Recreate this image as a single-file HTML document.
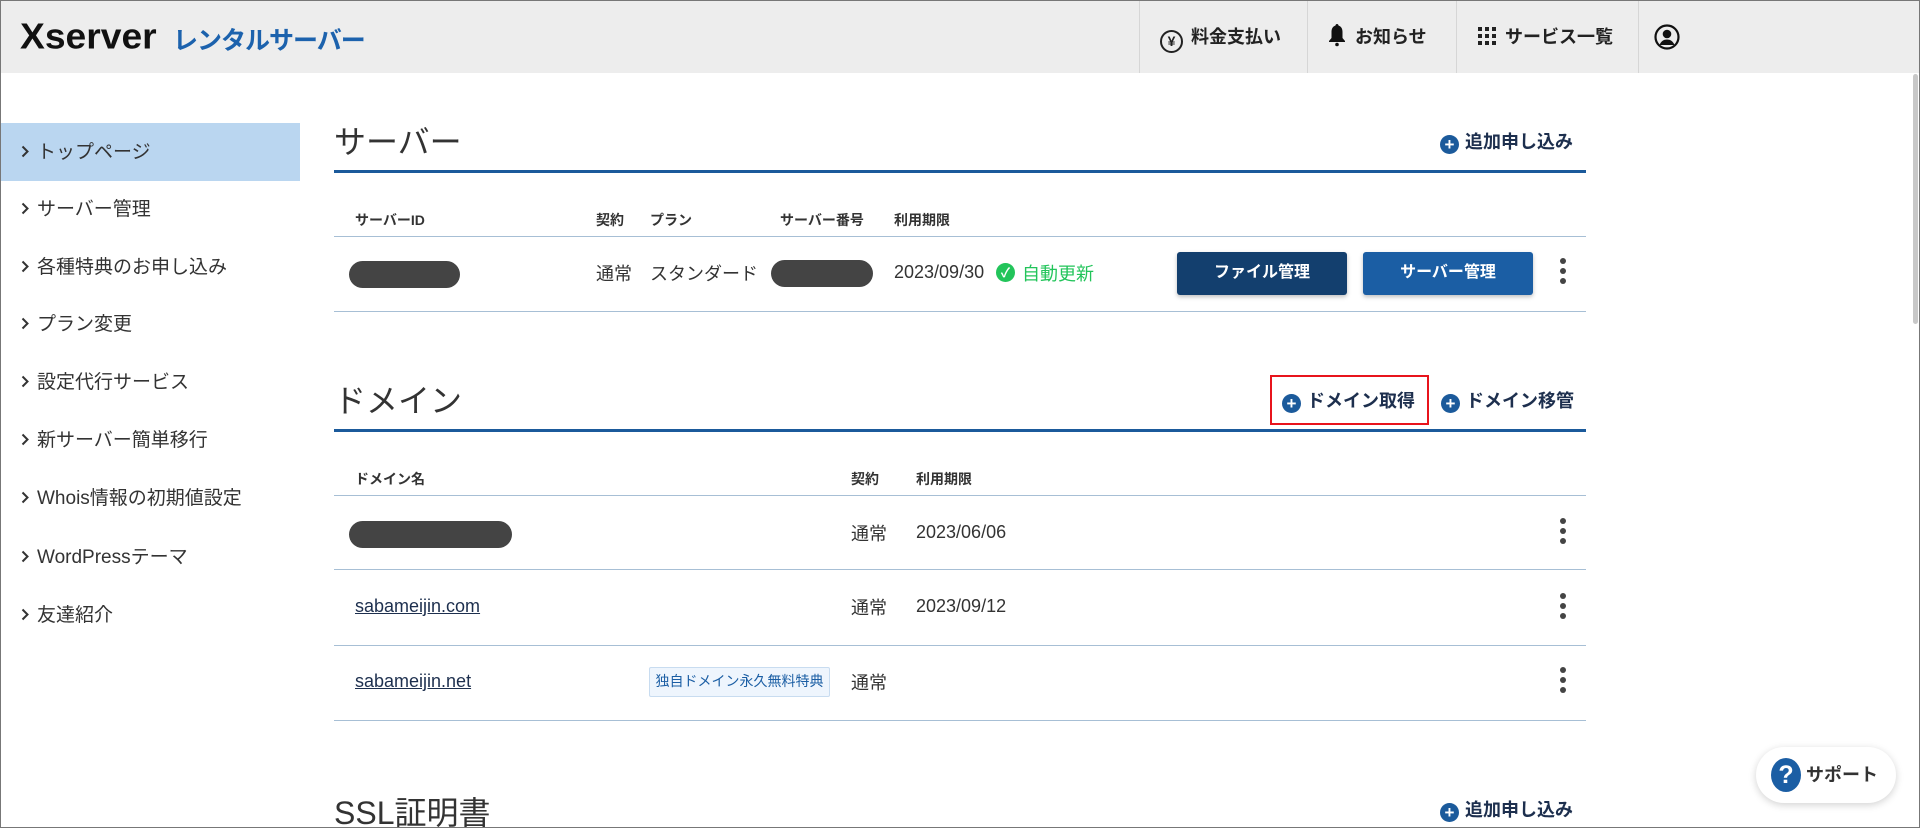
<!DOCTYPE html>
<html><head><meta charset="utf-8"><style>
*{margin:0;padding:0;box-sizing:border-box}
body{width:1920px;height:828px;overflow:hidden;background:#fff;font-family:"Liberation Sans","Noto Sans CJK JP",sans-serif;color:#333;position:relative}
.a{position:absolute;white-space:nowrap}
.hdr{left:0;top:0;width:1920px;height:73px;background:#ededed}
.vd{position:absolute;top:0;width:1px;height:73px;background:#d6d6d6}
.nav{font-size:18px;font-weight:bold;color:#222;top:23px}
.side{font-size:19px;color:#333;left:21px}
.side svg{margin-right:8px;vertical-align:0px}
.h2{font-size:32px;color:#333;left:334px}
.bl{left:334px;width:1252px;height:3px;background:#1b5a9b}
.ln{left:334px;width:1252px;height:1px;background:#a7bfd5}
.th{font-size:14px;font-weight:bold;color:#333}
.td{font-size:18px;color:#333}
.add{font-size:18px;font-weight:bold;color:#1d2f4e}
.pc{display:inline-block;width:19px;height:19px;border-radius:50%;background:#1b5a9b;color:#fff;font-size:17px;line-height:19px;text-align:center;vertical-align:-2px;margin-right:6px;font-weight:bold}
.pill{background:#444;border-radius:14px;height:27px}
.keb{width:6px}
.keb i{display:block;width:6px;height:6px;border-radius:50%;background:#444;margin:0 0 4px}
.lk{font-size:18px;color:#1d2f4e;text-decoration:underline}
</style></head><body>
<div class="a hdr"></div>
<div class="a" style="left:20px;top:17px;font-size:38px;font-weight:bold;color:#111;letter-spacing:0px;transform:scale(0.98,0.95);transform-origin:left top">Xserver</div>
<div class="a" style="left:173px;top:21px;font-size:25px;font-weight:bold;color:#1c62ad;letter-spacing:-1px">レンタルサーバー</div>
<div class="vd" style="left:1139px"></div><div class="vd" style="left:1307px"></div><div class="vd" style="left:1456px"></div><div class="vd" style="left:1638px"></div>
<div class="a nav" style="left:1160px"><span style="display:inline-block;width:23px;height:23px;border:2px solid #222;border-radius:50%;text-align:center;font-size:14px;line-height:19px;vertical-align:-3px;margin-right:8px">¥</span>料金支払い</div>
<div class="a nav" style="left:1328px"><svg width="18" height="24" viewBox="0 0 18 24" style="vertical-align:-4px;margin-right:9px"><path d="M9 1c-1 0-1.5.8-1.5 1.5C4.5 3.5 3.5 6 3.5 9v6L1 18v1h16v-1l-2.5-3V9c0-3-1-5.5-4-6.5C10.5 1.8 10 1 9 1z" fill="#111"/><circle cx="9" cy="21.5" r="1.8" fill="#111"/></svg>お知らせ</div>
<div class="a nav" style="left:1478px"><svg width="18" height="18" viewBox="0 0 18 18" style="vertical-align:-2px;margin-right:9px"><g fill="#222"><rect x="0" y="0" width="4" height="4"/><rect x="7" y="0" width="4" height="4"/><rect x="14" y="0" width="4" height="4"/><rect x="0" y="7" width="4" height="4"/><rect x="7" y="7" width="4" height="4"/><rect x="14" y="7" width="4" height="4"/><rect x="0" y="14" width="4" height="4"/><rect x="7" y="14" width="4" height="4"/><rect x="14" y="14" width="4" height="4"/></g></svg>サービス一覧</div>
<svg class="a" style="left:1654px;top:24px" width="26" height="26" viewBox="0 0 26 26"><circle cx="13" cy="13" r="11.5" fill="none" stroke="#111" stroke-width="2.2"/><circle cx="13" cy="10" r="4.3" fill="#111"/><path d="M5.5 21c1.5-4 4.5-5.5 7.5-5.5s6 1.5 7.5 5.5z" fill="#111"/></svg>

<div class="a" style="left:0;top:123px;width:300px;height:58px;background:#bad6f0"></div>
<div class="a side" style="top:137px"><svg width="8" height="13" viewBox="0 0 8 13"><path d="M1.5 1.5l5 5-5 5" fill="none" stroke="#333" stroke-width="2"/></svg>トップページ</div>
<div class="a side" style="top:194px"><svg width="8" height="13" viewBox="0 0 8 13"><path d="M1.5 1.5l5 5-5 5" fill="none" stroke="#333" stroke-width="2"/></svg>サーバー管理</div>
<div class="a side" style="top:252px"><svg width="8" height="13" viewBox="0 0 8 13"><path d="M1.5 1.5l5 5-5 5" fill="none" stroke="#333" stroke-width="2"/></svg>各種特典のお申し込み</div>
<div class="a side" style="top:309px"><svg width="8" height="13" viewBox="0 0 8 13"><path d="M1.5 1.5l5 5-5 5" fill="none" stroke="#333" stroke-width="2"/></svg>プラン変更</div>
<div class="a side" style="top:367px"><svg width="8" height="13" viewBox="0 0 8 13"><path d="M1.5 1.5l5 5-5 5" fill="none" stroke="#333" stroke-width="2"/></svg>設定代行サービス</div>
<div class="a side" style="top:425px"><svg width="8" height="13" viewBox="0 0 8 13"><path d="M1.5 1.5l5 5-5 5" fill="none" stroke="#333" stroke-width="2"/></svg>新サーバー簡単移行</div>
<div class="a side" style="top:483px"><svg width="8" height="13" viewBox="0 0 8 13"><path d="M1.5 1.5l5 5-5 5" fill="none" stroke="#333" stroke-width="2"/></svg>Whois情報の初期値設定</div>
<div class="a side" style="top:542px"><svg width="8" height="13" viewBox="0 0 8 13"><path d="M1.5 1.5l5 5-5 5" fill="none" stroke="#333" stroke-width="2"/></svg>WordPressテーマ</div>
<div class="a side" style="top:600px"><svg width="8" height="13" viewBox="0 0 8 13"><path d="M1.5 1.5l5 5-5 5" fill="none" stroke="#333" stroke-width="2"/></svg>友達紹介</div>

<div class="a h2" style="top:117px">サーバー</div>
<div class="a add" style="left:1440px;top:128px"><span class="pc">+</span>追加申し込み</div>
<div class="a bl" style="top:170px"></div>
<div class="a th" style="left:355px;top:210px">サーバーID</div>
<div class="a th" style="left:596px;top:210px">契約</div>
<div class="a th" style="left:650px;top:210px">プラン</div>
<div class="a th" style="left:780px;top:210px">サーバー番号</div>
<div class="a th" style="left:894px;top:210px">利用期限</div>
<div class="a ln" style="top:236px"></div>
<div class="a pill" style="left:349px;top:261px;width:111px"></div>
<div class="a td" style="left:596px;top:260px">通常</div>
<div class="a td" style="left:650px;top:260px">スタンダード</div>
<div class="a pill" style="left:771px;top:260px;width:102px"></div>
<div class="a td" style="left:894px;top:262px">2023/09/30</div>
<div class="a" style="left:996px;top:263px;width:19px;height:19px;border-radius:50%;background:#22c45a;color:#fff;font-size:13px;text-align:center;line-height:19px;font-weight:bold">✓</div>
<div class="a td" style="left:1022px;top:260px;color:#22c45a">自動更新</div>
<div class="a" style="left:1177px;top:252px;width:170px;height:43px;background:#133f6e;border-radius:3px;color:#fff;font-size:16px;font-weight:bold;text-align:center;line-height:41px;box-shadow:0 2px 4px rgba(0,0,0,.25)">ファイル管理</div>
<div class="a" style="left:1363px;top:252px;width:170px;height:43px;background:#1b5ea4;border-radius:3px;color:#fff;font-size:16px;font-weight:bold;text-align:center;line-height:41px;box-shadow:0 2px 4px rgba(0,0,0,.25)">サーバー管理</div>
<div class="a keb" style="left:1560px;top:258px"><i></i><i></i><i></i></div>
<div class="a ln" style="top:311px"></div>

<div class="a h2" style="top:376px">ドメイン</div>
<div class="a" style="left:1270px;top:375px;width:159px;height:50px;border:2px solid #e8141c"></div>
<div class="a add" style="left:1282px;top:387px"><span class="pc">+</span>ドメイン取得</div>
<div class="a add" style="left:1441px;top:387px"><span class="pc">+</span>ドメイン移管</div>
<div class="a bl" style="top:429px"></div>
<div class="a th" style="left:355px;top:469px">ドメイン名</div>
<div class="a th" style="left:851px;top:469px">契約</div>
<div class="a th" style="left:916px;top:469px">利用期限</div>
<div class="a ln" style="top:495px"></div>
<div class="a pill" style="left:349px;top:521px;width:163px"></div>
<div class="a td" style="left:851px;top:520px">通常</div>
<div class="a td" style="left:916px;top:522px">2023/06/06</div>
<div class="a keb" style="left:1560px;top:518px"><i></i><i></i><i></i></div>
<div class="a ln" style="top:569px"></div>
<div class="a lk" style="left:355px;top:596px">sabameijin.com</div>
<div class="a td" style="left:851px;top:594px">通常</div>
<div class="a td" style="left:916px;top:596px">2023/09/12</div>
<div class="a keb" style="left:1560px;top:593px"><i></i><i></i><i></i></div>
<div class="a ln" style="top:645px"></div>
<div class="a lk" style="left:355px;top:671px">sabameijin.net</div>
<div class="a" style="left:649px;top:667px;width:181px;height:30px;background:#eef5fd;border:1px solid #c8dcf0;border-radius:2px;color:#1b5ea4;font-size:14px;text-align:center;line-height:27px">独自ドメイン永久無料特典</div>
<div class="a td" style="left:851px;top:669px">通常</div>
<div class="a keb" style="left:1560px;top:667px"><i></i><i></i><i></i></div>
<div class="a ln" style="top:720px"></div>

<div class="a h2" style="top:788px">SSL証明書</div>
<div class="a add" style="left:1440px;top:796px"><span class="pc">+</span>追加申し込み</div>

<div class="a" style="left:1756px;top:747px;width:140px;height:56px;background:#fff;border-radius:28px;box-shadow:0 2px 8px rgba(0,0,0,.18)"></div>
<div class="a" style="left:1771px;top:758px;width:30px;height:34px;border-radius:50%;background:#1b5ea4;color:#fff;font-size:25px;font-weight:bold;text-align:center;line-height:34px">?</div>
<div class="a" style="left:1806px;top:761px;font-size:18px;font-weight:bold;color:#333">サポート</div>

<div class="a" style="left:1912px;top:73px;width:8px;height:755px;background:#fff"></div>
<div class="a" style="left:1913px;top:74px;width:5px;height:250px;background:#c8c8c8;border-radius:3px"></div>
<div class="a" style="left:0;top:0;width:1920px;height:828px;border:1px solid #777;pointer-events:none"></div>
</body></html>
